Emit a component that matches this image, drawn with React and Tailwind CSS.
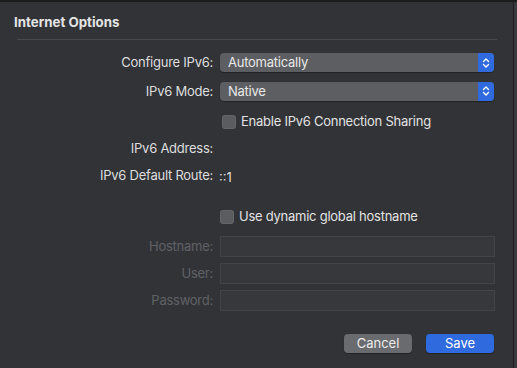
const FONT = { fontFamily: '"Inter", "Liberation Sans", sans-serif' };

function Select({ value }) {
  return (
    <div className="flex h-[19px] w-[274px] overflow-hidden rounded-[4px] bg-[#5d5e61] shadow-[0_1px_1px_rgba(0,0,0,0.35)]">
      <div className="flex flex-1 items-center pl-[8px] text-[13px] tracking-[-0.25px] text-[#e8e8e8]">{value}</div>
      <div className="flex w-[16px] items-center justify-center bg-[#2f6ade]">
        <svg width="8" height="12" viewBox="0 0 8 12" fill="none" stroke="#ffffff" strokeWidth="1.4" strokeLinecap="round" strokeLinejoin="round">
          <path d="M1.5 4.5 L4 2 L6.5 4.5" />
          <path d="M1.5 7.5 L4 10 L6.5 7.5" />
        </svg>
      </div>
    </div>
  );
}

function Check({ label }) {
  return (
    <div className="flex items-center gap-[5px]">
      <div className="h-[14px] w-[14px] rounded-[3px] bg-[#5b5c5f] shadow-[inset_0_0_0_1px_rgba(255,255,255,0.06)]" />
      <span className="text-[13px] tracking-[-0.25px] text-[#e2e2e2]">{label}</span>
    </div>
  );
}

function Row({ label, children, dim, className = "" }) {
  return (
    <div className={`flex items-center ${className}`}>
      <div className={`w-[213px] text-right text-[13px] tracking-[-0.25px] ${dim ? "text-[#606165]" : "text-[#dedede]"}`}>{label}</div>
      <div className="ml-[7px]">{children}</div>
    </div>
  );
}

function Field() {
  return <div className="h-[21px] w-[275px] border border-[#434448] bg-[#37383c]" />;
}

export default function App() {
  return (
    <div className="flex h-[368px] w-[517px] border-t-2 border-[#1b1b1c] bg-[#323337]" style={FONT}>
      <div className="flex w-[513px] flex-col">
        <div className="mt-[12px] pl-[14px] text-[13.3px] font-bold leading-[16px] text-[#e4e4e4]">Internet Options</div>
        <div className="ml-[17px] mt-[9px] h-px w-[480px] bg-[#48494d]" />

        <Row label="Configure IPv6:" className="mt-[13px]">
          <Select value="Automatically" />
        </Row>
        <Row label="IPv6 Mode:" className="mt-[9px]">
          <Select value="Native" />
        </Row>
        <div className="ml-[222px] mt-[13px] h-[16px] flex items-center">
          <Check label="Enable IPv6 Connection Sharing" />
        </div>
        <Row label="IPv6 Address:" className="mt-[11px] h-[16px]" />
        <Row label="IPv6 Default Route:" className="mt-[11px] h-[16px]">
          <span className="-ml-[1px] text-[13px] text-[#dedede]">::1</span>
        </Row>
        <div className="ml-[220px] mt-[25px] flex h-[16px] items-center">
          <Check label="Use dynamic global hostname" />
        </div>
        <Row label="Hostname:" dim className="mt-[11px]">
          <Field />
        </Row>
        <Row label="User:" dim className="mt-[6px]">
          <Field />
        </Row>
        <Row label="Password:" dim className="mt-[6px]">
          <Field />
        </Row>

        <div className="mt-[23px] flex justify-end gap-[14px] pr-[19px]">
          <button className="flex h-[19px] w-[68px] items-center justify-center rounded-[4px] bg-[#6a6b6e] text-[13px] text-[#ececec] shadow-[0_1px_1px_rgba(0,0,0,0.35)]">
            Cancel
          </button>
          <button className="flex h-[19px] w-[68px] items-center justify-center rounded-[4px] bg-[#2f6ade] text-[13px] text-white shadow-[0_1px_1px_rgba(0,0,0,0.35)]">
            Save
          </button>
        </div>
      </div>
      <div className="w-px bg-[#1f1f21]" />
      <div className="flex-1 bg-[#3a3b3e]" />
    </div>
  );
}
